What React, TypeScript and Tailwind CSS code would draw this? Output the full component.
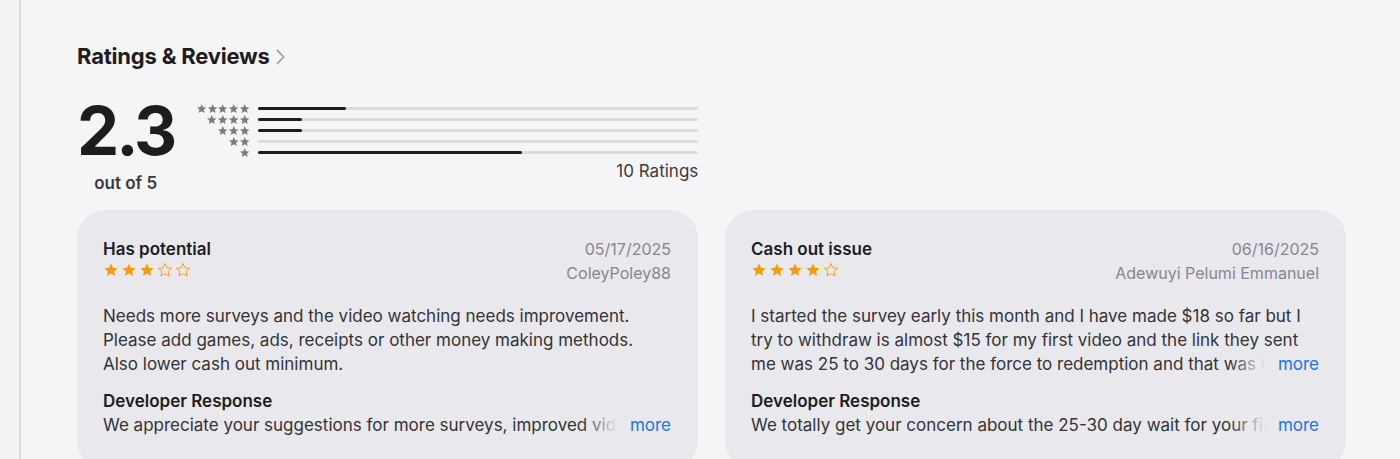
import React from 'react';

type Review = {
  title: string;
  date: string;
  author: string;
  rating: number;
  body: string;
  response: string;
};

const reviews: Review[] = [
  {
    title: 'Has potential',
    date: '05/17/2025',
    author: 'ColeyPoley88',
    rating: 3,
    body: 'Needs more surveys and the video watching needs improvement. Please add games, ads, receipts or other money making methods. Also lower cash out minimum.',
    response:
      'We appreciate your suggestions for more surveys, improved video watching, and more ways to earn.',
  },
  {
    title: 'Cash out issue',
    date: '06/16/2025',
    author: 'Adewuyi Pelumi Emmanuel',
    rating: 4,
    body: 'I started the survey early this month and I have made $18 so far but I try to withdraw is almost $15 for my first video and the link they sent me was 25 to 30 days for the force to redemption and that was too long for me to wait.',
    response:
      'We totally get your concern about the 25-30 day wait for your first redemption, and we are working on it.',
  },
];

// share of ratings for 5..1 stars
const histogram = [20, 10, 10, 0, 60];

const STAR_PATH =
  'M12 2.2l2.9 6.6 7.1.6-5.4 4.7 1.6 7-6.2-3.7-6.2 3.7 1.6-7L2 9.4l7.1-.6z';

function Star({ filled, className }: { filled: boolean; className: string }) {
  return (
    <svg viewBox="0 0 24 24" className={className}>
      <path
        d={STAR_PATH}
        fill={filled ? 'currentColor' : 'none'}
        stroke="currentColor"
        strokeWidth={filled ? 0 : 1.4}
        strokeLinejoin="round"
      />
    </svg>
  );
}

function ReviewCard({ review }: { review: Review }) {
  return (
    <div className="w-[621px] shrink-0 min-w-0 rounded-[28px] bg-[#e9e9ed] pl-[26px] pr-[27px] pt-[27px] pb-8 text-[17px] leading-6 text-[#1d1d1f]">
      <div className="flex justify-between">
        <div>
          <div className="font-semibold">{review.title}</div>
          <div className="flex gap-[2px] pt-[1px] text-[#f79a0f]">
            {[1, 2, 3, 4, 5].map(i => (
              <Star key={i} filled={i <= review.rating} className="w-4 h-4" />
            ))}
          </div>
        </div>
        <div className="text-right text-[16px] text-[#86868b]">
          <div>{review.date}</div>
          <div>{review.author}</div>
        </div>
      </div>

      <div className="relative mt-[19px]">
        <p className="line-clamp-3 text-[#333336]">{review.body}</p>
        {review.body.length > 160 && (
          <span className="absolute right-0 bottom-0 pl-12 bg-gradient-to-r from-transparent via-[#e9e9ed] via-40% to-[#e9e9ed] text-[#1a73e8]">
            more
          </span>
        )}
      </div>

      <div className="mt-[13px] font-semibold">Developer Response</div>
      <div className="relative">
        <p className="whitespace-nowrap overflow-hidden pr-10 text-[#333336]">{review.response}</p>
        <span className="absolute right-0 bottom-0 pl-12 bg-gradient-to-r from-transparent via-[#e9e9ed] via-40% to-[#e9e9ed] text-[#1a73e8]">
          more
        </span>
      </div>
    </div>
  );
}

export default function App() {
  return (
    <div
      className="h-[459px] overflow-hidden bg-[#f5f5f7] flex"
      style={{ fontFamily: 'Inter, "Noto Sans", sans-serif' }}
    >
      <div className="w-[21px] shrink-0 border-r-2 border-[#dcdce0] bg-[#f3f3f5]" />

      <div className="flex-1 min-w-0 pl-[56px] pt-[40px]">
        <h2 className="flex items-center gap-[6px] text-[22px] font-bold tracking-[-0.2px] text-[#1d1d1f]">
          Ratings &amp; Reviews
          <svg viewBox="0 0 10 18" className="w-[9px] h-[16px] text-[#a1a1a6]">
            <path d="M1.5 1.5l7 7.5-7 7.5" fill="none" stroke="currentColor" strokeWidth="2" strokeLinecap="round" strokeLinejoin="round" />
          </svg>
        </h2>

        <div className="flex mt-[30px]">
          <div className="flex flex-col items-center">
            <div className="text-[67px] font-bold leading-[56px] tracking-[-3px] text-[#1d1d1f]">2.3</div>
            <div className="mt-[12px] text-[17px] font-semibold text-[#3a3a3c]">out of 5</div>
          </div>

          <div className="ml-[22px] w-[502px]">
            <div className="flex flex-col">
              {histogram.map((pct, idx) => {
                const stars = 5 - idx;
                return (
                  <div key={idx} className="flex items-center h-[11px]">
                    <div className="w-[54px] flex justify-end text-[#7c7c80]">
                      {Array.from({ length: stars }).map((_, i) => (
                        <Star key={i} filled className="w-[11.5px] h-[11.5px] -ml-[0.5px]" />
                      ))}
                    </div>
                    <div className="ml-[8px] flex-1 h-[3px] rounded-full bg-[#dcdce0]">
                      <div className="h-full rounded-full bg-[#1d1d1f]" style={{ width: `${pct}%` }} />
                    </div>
                  </div>
                );
              })}
            </div>
            <div className="mt-[1px] text-right text-[17px] text-[#3a3a3c]">10 Ratings</div>
          </div>
        </div>

        <div className="flex gap-[27px] mt-[13px]">
          {reviews.map(r => (
            <ReviewCard key={r.title} review={r} />
          ))}
        </div>
      </div>
    </div>
  );
}
